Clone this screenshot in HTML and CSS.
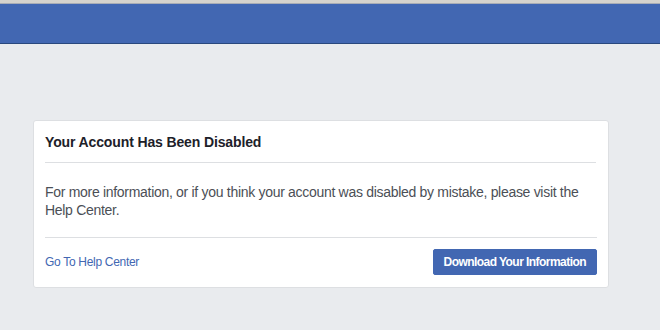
FILE: index.html
```html
<!DOCTYPE html>
<html lang="en">
<head>
  <meta charset="UTF-8" />
  <title>Account Disabled</title>
  <link rel="stylesheet" href="styles.css">
</head>
<body>
  <div class="top-strip"></div>
  <header class="bluebar"></header>
  <main>
    <section class="card">
      <h2 class="card-title">Your Account Has Been Disabled</h2>
      <p class="card-body">For more information, or if you think your account was disabled by mistake, please visit the Help Center.</p>
      <div class="card-footer">
        <a href="#" class="help-link">Go To Help Center</a>
        <button class="download-btn">Download Your Information</button>
      </div>
    </section>
  </main>
</body>
</html>
```

FILE: styles.css
```css
:root {
  --blue: #4267b2;
  --blue-dark: #29487d;
  --bg: #e9ebee;
  --border: #dddfe2;
  --title: #1d2129;
  --text: #4b4f56;
}
* { box-sizing: border-box; }
body {
  margin: 0;
  font-family: 'Liberation Sans', Arial, sans-serif;
  background-color: var(--bg);
}
.top-strip {
  height: 4px;
  background-color: #d6d3cd;
  border-bottom: 1px solid #a9adb6;
}
.bluebar {
  height: 40px;
  background-color: var(--blue);
  border-bottom: 1px solid var(--blue-dark);
}
main {
  padding: 76px 0 0 33px;
}
.card {
  width: 576px;
  background-color: #fff;
  border: 1px solid var(--border);
  border-radius: 3px;
}
.card-title {
  margin: 0 12px 0 11px;
  padding: 13px 0 11px;
  font-size: 14px;
  line-height: 17px;
  font-weight: 700;
  letter-spacing: -0.13px;
  color: var(--title);
  border-bottom: 1px solid var(--border);
}
.card-body {
  margin: 0 11px;
  padding: 20px 0 18px;
  font-size: 14px;
  line-height: 18px;
  letter-spacing: -0.3px;
  color: var(--text);
  border-bottom: 1px solid var(--border);
}
.card-footer {
  display: flex;
  align-items: center;
  justify-content: space-between;
  padding: 11px 11px 12px 11px;
}
.help-link {
  font-size: 12px;
  letter-spacing: -0.3px;
  color: var(--blue);
  text-decoration: none;
}
.download-btn {
  height: 26px;
  padding: 0 10px;
  background-color: var(--blue);
  border: 1px solid var(--blue);
  border-radius: 2px;
  color: #fff;
  font-family: inherit;
  font-size: 12px;
  font-weight: 700;
  letter-spacing: -0.55px;
  cursor: pointer;
}
```
